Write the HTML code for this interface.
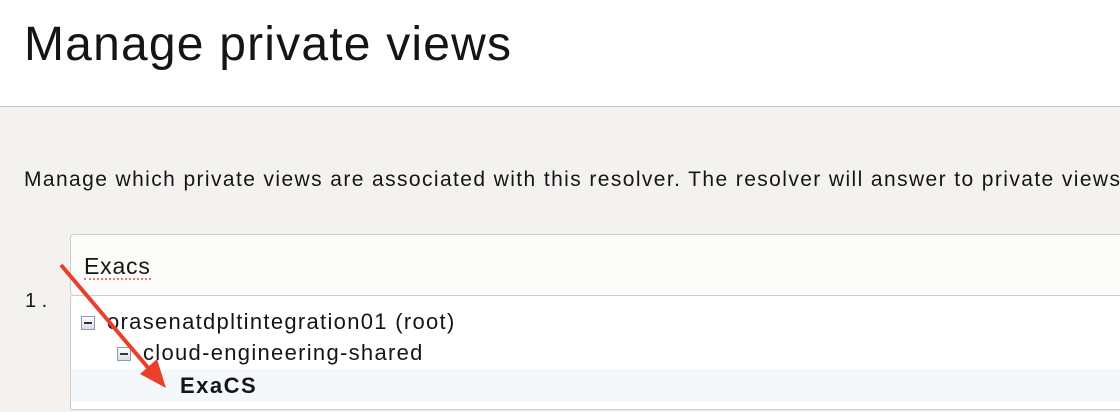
<!DOCTYPE html>
<html><head><style>
body{margin:0;width:1120px;height:412px;overflow:hidden;background:#f3f2f1;font-family:"Liberation Sans",Arial,sans-serif;color:#161513;position:relative}
.hdr{position:absolute;left:0;top:0;width:1120px;height:106px;background:#fff;border-bottom:1px solid #c8c6c4}
.hdr h1{margin:0;position:absolute;left:24px;top:17px;font-size:48px;font-weight:normal;letter-spacing:1.2px}
.desc{position:absolute;left:24px;top:168px;font-size:21px;white-space:nowrap;letter-spacing:1.4px}
.num{position:absolute;left:25px;top:290px;font-size:20px}
.inp{position:absolute;left:70px;top:234px;width:1060px;height:60px;background:#fbfbfa;border:1px solid #cfcdcb;border-radius:4px}
.inp span{position:absolute;left:13px;top:19px;font-size:23px;border-bottom:2px dotted #e57b6e;line-height:24px;letter-spacing:0.8px}
.dd{position:absolute;left:70px;top:295px;width:1060px;height:113px;background:#fff;border:1px solid #cfcdcb;border-radius:3px}
.row{position:absolute;font-size:22px;white-space:nowrap;letter-spacing:1.3px}
.box{position:absolute;width:12px;height:12px;border:1px solid #8a9bb0;background:linear-gradient(#fff,#d8dee6)}
.box:after{content:"";position:absolute;left:2px;top:5px;width:8px;height:2px;background:#333}
.sel{position:absolute;left:0;top:73px;width:1060px;height:33px;background:#f5f8fb}
</style></head><body>
<div class="hdr"><h1>Manage private views</h1></div>
<div class="desc">Manage which private views are associated with this resolver. The resolver will answer to private views</div>
<div class="num">1 .</div>
<div class="inp"><span>Exacs</span></div>
<div class="dd">
<div class="sel"></div>
<div class="box" style="left:10px;top:20px"></div>
<div class="row" style="left:36px;top:13px">orasenatdpltintegration01 (root)</div>
<div class="box" style="left:46px;top:51px"></div>
<div class="row" style="left:72px;top:44px">cloud-engineering-shared</div>
<div class="row" style="left:109px;top:77px;font-weight:bold;letter-spacing:1.5px">ExaCS</div>
</div>
<svg style="position:absolute;left:0;top:0" width="1120" height="412">
<line x1="61" y1="265" x2="150" y2="370" stroke="#e8402a" stroke-width="4"/>
<polygon points="166,388 140,374 157,359" fill="#e8402a"/>
</svg>
</body></html>
